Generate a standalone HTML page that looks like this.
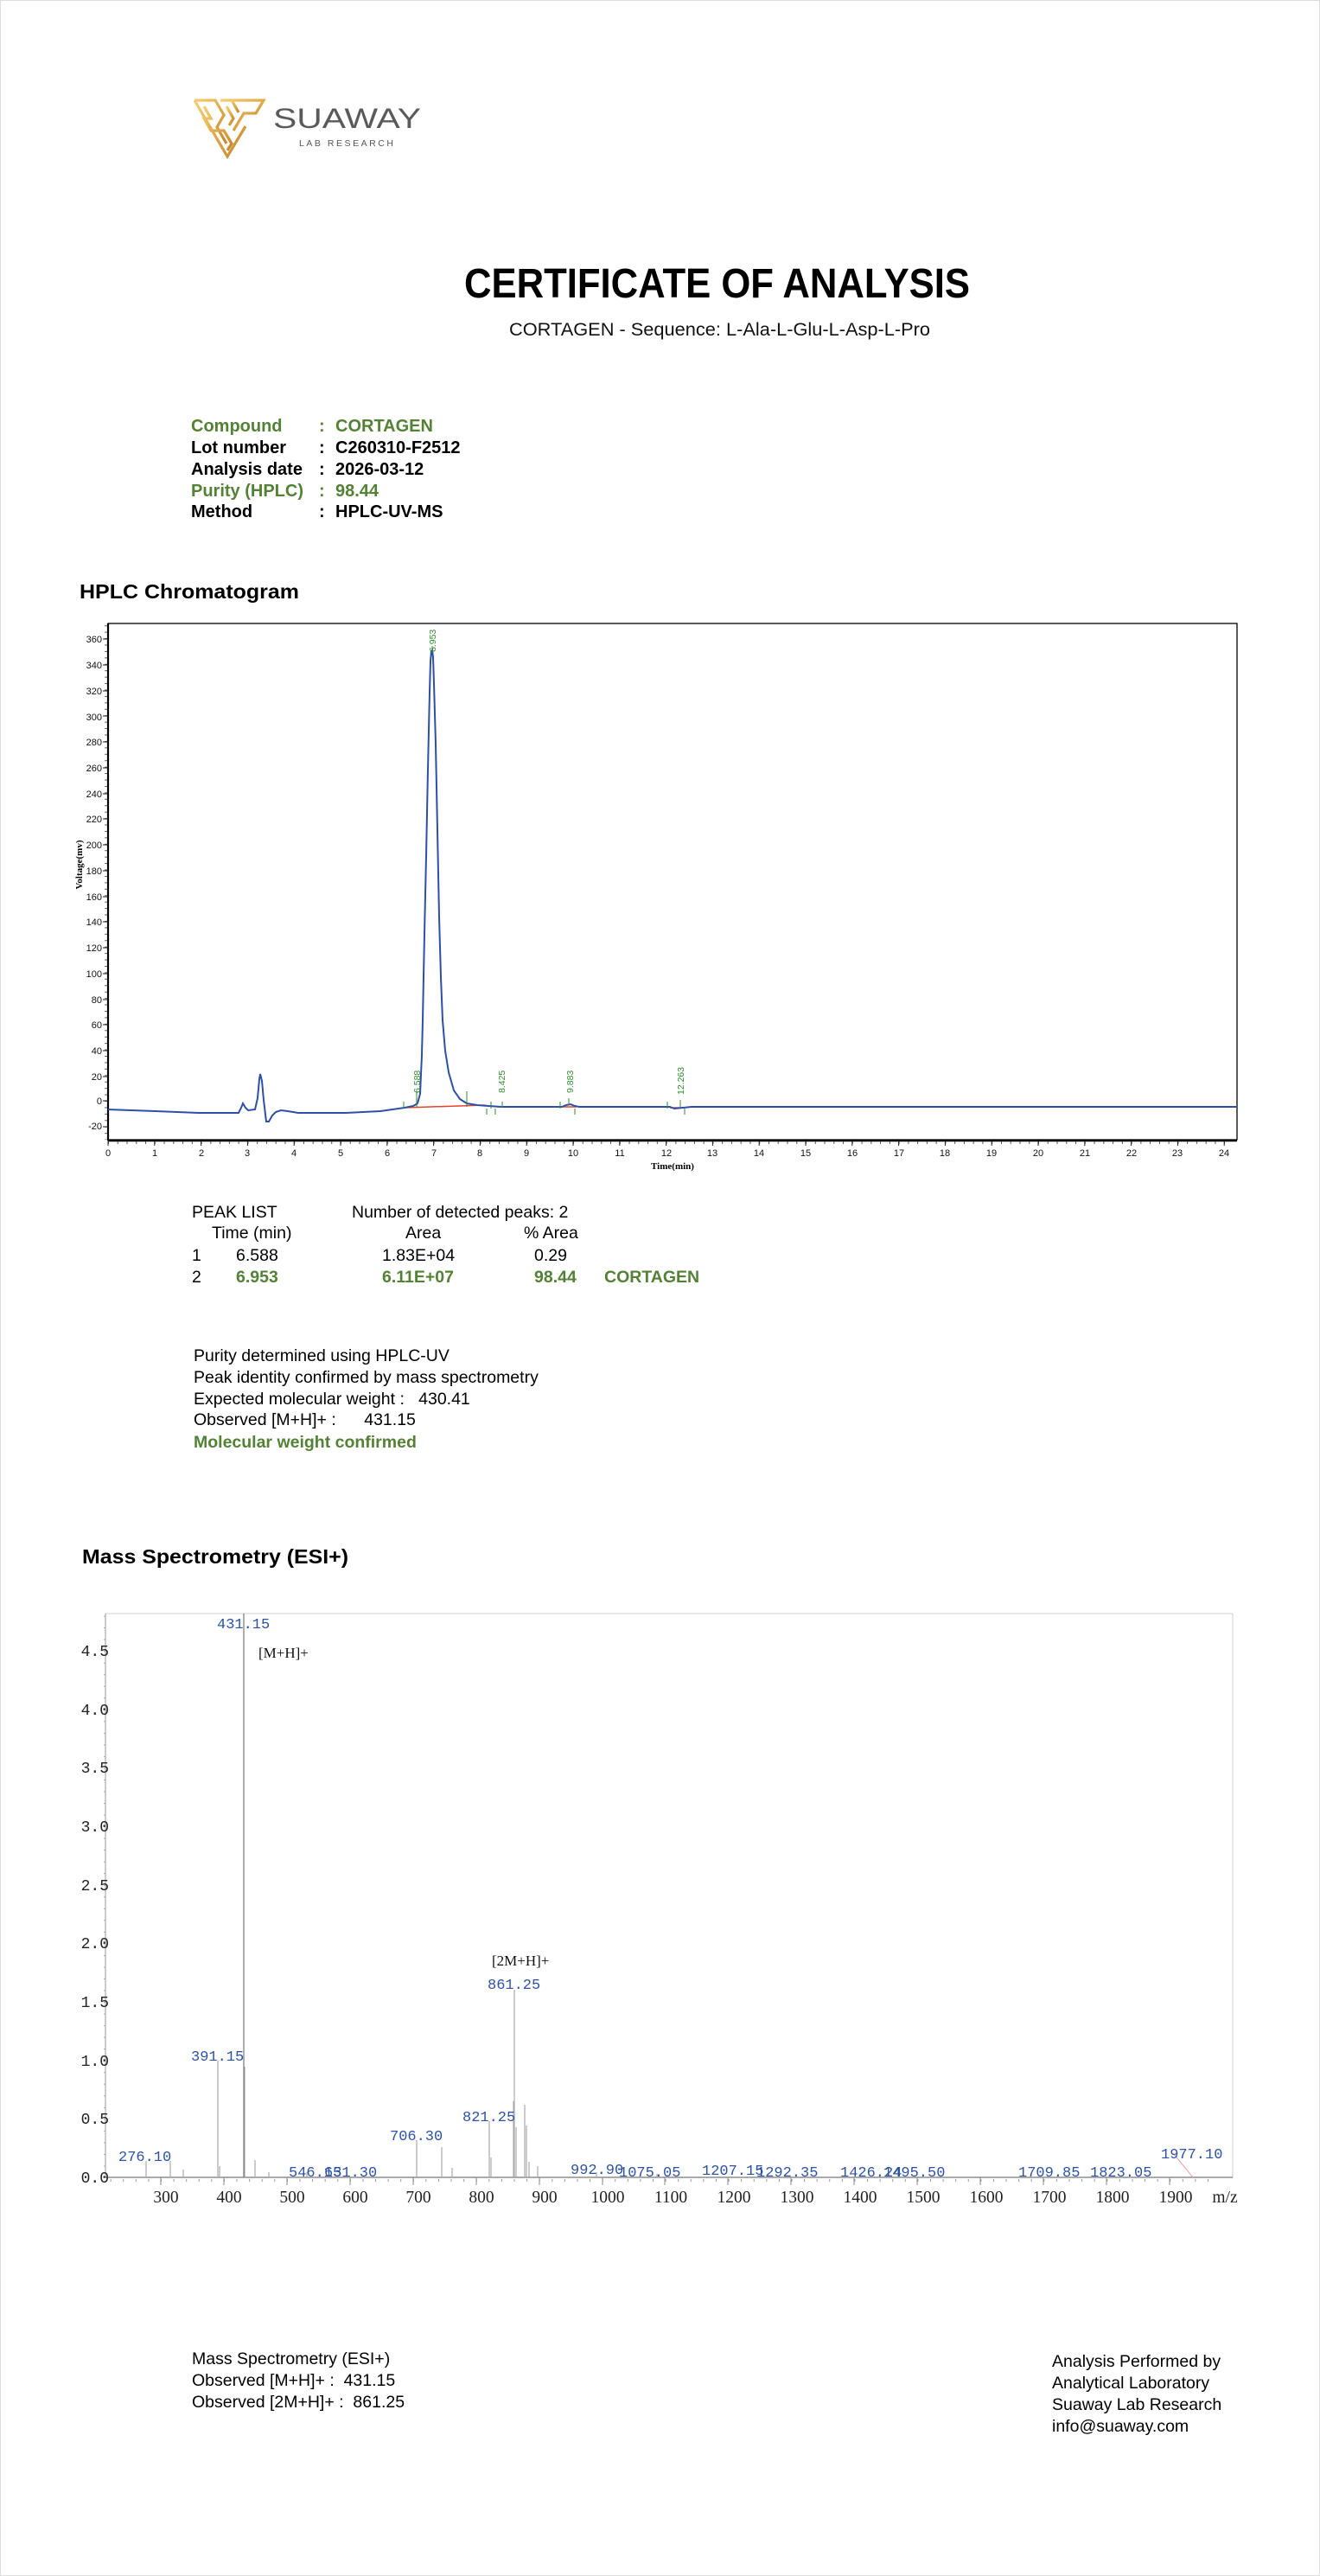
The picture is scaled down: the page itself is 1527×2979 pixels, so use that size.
<!DOCTYPE html>
<html><head><meta charset="utf-8"><style>
html,body{margin:0;padding:0;background:#fff}
svg{display:block}
text{font-family:"Liberation Sans",Arial,sans-serif}
.mono text, text.mono{font-family:"Liberation Mono",monospace}
.serif text, text.serif{font-family:"Liberation Serif",serif}
</style></head><body>
<svg width="1527" height="2979" viewBox="0 0 1527 2979" xmlns="http://www.w3.org/2000/svg">
<defs>
<linearGradient id="gold" x1="0" y1="0" x2="1" y2="1">
<stop offset="0" stop-color="#f2cf72"/><stop offset="0.5" stop-color="#e0a94a"/><stop offset="1" stop-color="#c4862e"/>
</linearGradient>
<pattern id="hx" x="125" y="0" width="10.76" height="10" patternUnits="userSpaceOnUse"><rect x="0" y="0" width="1" height="3" fill="#555"/></pattern>
<pattern id="hy" x="0" y="1273" width="10" height="7.43" patternUnits="userSpaceOnUse"><rect x="0" y="0" width="4" height="1" fill="#666"/></pattern>
<pattern id="mx" x="186" y="0" width="14.59" height="10" patternUnits="userSpaceOnUse"><rect x="0" y="0" width="1" height="4" fill="#999"/></pattern>
<pattern id="my" x="0" y="2518" width="10" height="13.53" patternUnits="userSpaceOnUse"><rect x="0" y="0" width="5" height="1" fill="#aaa"/></pattern>
</defs>
<rect x="0.5" y="0.5" width="1526" height="2978" fill="#fff" stroke="#ddd"/>

<!-- logo -->
<g fill="none" stroke="url(#gold)" stroke-width="3.2" stroke-linejoin="miter">
<path d="M225 116 L263 181 L284 146"/>
<path d="M225 116 L249 116 L259 133 L251 147 L262 166"/>
<path d="M236 123 L244 137 L236 137 L244 151 L259 151 L268 166 L263 174"/>
<path d="M255 116 L305 116 L296 131 L282 131 L276 141 L270 151"/>
<path d="M262 123 L270 137 L265 145"/>
<path d="M268 116 L276 130"/>
</g>
<text x="316" y="148" font-size="32" fill="#5a5a5a" textLength="171" lengthAdjust="spacingAndGlyphs">SUAWAY</text>
<text x="346" y="169" font-size="10.5" fill="#555" letter-spacing="3" textLength="112">LAB RESEARCH</text>

<!-- title -->
<text x="537" y="344" font-size="48" font-weight="bold" fill="#000" textLength="585" lengthAdjust="spacingAndGlyphs">CERTIFICATE OF ANALYSIS</text>
<text x="589" y="388" font-size="21" fill="#111" textLength="487" lengthAdjust="spacingAndGlyphs">CORTAGEN - Sequence: L-Ala-L-Glu-L-Asp-L-Pro</text>

<!-- info -->
<g font-size="20" font-weight="bold">
<text x="221" y="499" fill="#538135">Compound</text><text x="369" y="499" fill="#538135">:</text><text x="388" y="499" fill="#538135">CORTAGEN</text>
<text x="221" y="524">Lot number</text><text x="369" y="524">:</text><text x="388" y="524">C260310-F2512</text>
<text x="221" y="549">Analysis date</text><text x="369" y="549">:</text><text x="388" y="549">2026-03-12</text>
<text x="221" y="574" fill="#538135">Purity (HPLC)</text><text x="369" y="574" fill="#538135">:</text><text x="388" y="574" fill="#538135">98.44</text>
<text x="221" y="598">Method</text><text x="369" y="598">:</text><text x="388" y="598">HPLC-UV-MS</text>
</g>

<text x="92" y="692" font-size="23" font-weight="bold" textLength="254" lengthAdjust="spacingAndGlyphs">HPLC Chromatogram</text>

<!-- HPLC chart -->
<rect x="125" y="721" width="1306" height="597" fill="none" stroke="#000" stroke-width="1.3"/>
<line x1="125" y1="721" x2="125" y2="1319" stroke="#000" stroke-width="2.2"/>
<line x1="125" y1="1319" x2="1431" y2="1319" stroke="#000" stroke-width="2.4"/>
<rect x="125" y="1320" width="1292" height="3" fill="url(#hx)"/>
<rect x="121" y="721" width="4" height="597" fill="url(#hy)"/>
<g font-size="11" fill="#111" text-anchor="end">
<text x="118" y="743">360</text><text x="118" y="773">340</text><text x="118" y="803">320</text><text x="118" y="833">300</text>
<text x="118" y="862">280</text><text x="118" y="892">260</text><text x="118" y="922">240</text><text x="118" y="951">220</text>
<text x="118" y="981">200</text><text x="118" y="1011">180</text><text x="118" y="1041">160</text><text x="118" y="1070">140</text>
<text x="118" y="1100">120</text><text x="118" y="1130">100</text><text x="118" y="1160">80</text><text x="118" y="1189">60</text>
<text x="118" y="1219">40</text><text x="118" y="1249">20</text><text x="118" y="1277">0</text><text x="118" y="1306">-20</text>
</g>
<g stroke="#222" stroke-width="1">
<path d="M119 739H125M119 769H125M119 799H125M119 828H125M119 858H125M119 888H125M119 918H125M119 947H125M119 977H125M119 1007H125M119 1037H125M119 1066H125M119 1096H125M119 1126H125M119 1156H125M119 1185H125M119 1215H125M119 1245H125M119 1273H125M119 1303H125"/>
<path d="M125 1319v6M178.8 1319v6M232.6 1319v6M286.4 1319v6M340.2 1319v6M394 1319v6M447.8 1319v6M501.6 1319v6M555.4 1319v6M609.2 1319v6M663 1319v6M716.8 1319v6M770.6 1319v6M824.4 1319v6M878.2 1319v6M932 1319v6M985.8 1319v6M1039.6 1319v6M1093.4 1319v6M1147.2 1319v6M1201 1319v6M1254.8 1319v6M1308.6 1319v6M1362.4 1319v6M1416.2 1319v6"/>
</g>
<g font-size="11" fill="#111" text-anchor="middle">
<text x="125" y="1337">0</text><text x="179" y="1337">1</text><text x="233" y="1337">2</text><text x="286" y="1337">3</text><text x="340" y="1337">4</text><text x="394" y="1337">5</text><text x="448" y="1337">6</text><text x="502" y="1337">7</text><text x="555" y="1337">8</text><text x="609" y="1337">9</text><text x="663" y="1337">10</text><text x="717" y="1337">11</text><text x="771" y="1337">12</text><text x="824" y="1337">13</text><text x="878" y="1337">14</text><text x="932" y="1337">15</text><text x="986" y="1337">16</text><text x="1040" y="1337">17</text><text x="1093" y="1337">18</text><text x="1147" y="1337">19</text><text x="1201" y="1337">20</text><text x="1255" y="1337">21</text><text x="1309" y="1337">22</text><text x="1362" y="1337">23</text><text x="1416" y="1337">24</text>
</g>
<text x="778" y="1352" font-size="11" class="serif" font-weight="bold" text-anchor="middle">Time(min)</text>
<text transform="translate(95,1000) rotate(-90)" font-size="11" class="serif" font-weight="bold" text-anchor="middle">Voltage(mv)</text>

<!-- red baselines -->
<g stroke="#e8412c" stroke-width="1.5" fill="none">
<path d="M468 1281 L560 1278 L565 1279"/><path d="M575 1280L587 1280"/><path d="M650 1280L667 1280"/><path d="M775 1281L792 1281"/>
</g>
<!-- trace -->
<path fill="none" stroke="#2e4fa8" stroke-width="2" d="M125 1283 L180 1285 L230 1287 L276 1287 L279 1281 L281 1276 L284 1281 L287 1284 L295 1283 L298 1270 L300 1248 L301 1242 L303 1250 L305 1272 L308 1297 L311 1297 L315 1290 L319 1286 L325 1284 L333 1285 L345 1287 L400 1287 L440 1285 L468 1281 L478 1279 L483 1276 L486 1265 L488 1220 L489 1180 L491 1080 L493 990 L495 890 L497 800 L498 765 L499 753 L500 752 L501 760 L502 790 L504 860 L506 960 L508 1060 L510 1130 L512 1180 L515 1215 L519 1240 L525 1261 L532 1271 L540 1276 L552 1278 L565 1279 L580 1280 L650 1280 L655 1278 L660 1277 L665 1279 L670 1280 L775 1280 L780 1282 L800 1280 L1431 1280"/>
<!-- peak markers -->
<g stroke="#2e8b2e" stroke-width="1" fill="none">
<path d="M467 1274v8M482 1262v18M540 1262v18M563 1282v7M568 1274v8M573 1282v7M581 1274v7M648 1274v8M658 1270v8M665 1282v7M772 1274v8M787 1272v8M792 1282v7M500 755v-8"/>
</g>
<g font-size="10.5" fill="#2e8b2e">
<text transform="translate(486,1264) rotate(-90)">6.588</text>
<text transform="translate(584,1264) rotate(-90)">8.425</text>
<text transform="translate(663,1264) rotate(-90)">9.883</text>
<text transform="translate(791,1266) rotate(-90)">12.263</text>
<text transform="translate(504,754) rotate(-90)">6.953</text>
</g>

<!-- peak list -->
<g font-size="19.5" fill="#000">
<text x="222" y="1408">PEAK LIST</text><text x="407" y="1408">Number of detected peaks: 2</text>
<text x="245" y="1432">Time (min)</text><text x="469" y="1432">Area</text><text x="606" y="1432">% Area</text>
<text x="222" y="1458">1</text><text x="273" y="1458">6.588</text><text x="442" y="1458">1.83E+04</text><text x="618" y="1458">0.29</text>
<text x="222" y="1483">2</text>
<g font-weight="bold" fill="#538135"><text x="273" y="1483">6.953</text><text x="442" y="1483">6.11E+07</text><text x="618" y="1483">98.44</text><text x="699" y="1483">CORTAGEN</text></g>
</g>
<g font-size="19.5" fill="#000">
<text x="224" y="1574">Purity determined using HPLC-UV</text>
<text x="224" y="1599">Peak identity confirmed by mass spectrometry</text>
<text x="224" y="1624" xml:space="preserve">Expected molecular weight :   430.41</text>
<text x="224" y="1648" xml:space="preserve">Observed [M+H]+ :      431.15</text>
<text x="224" y="1674" font-weight="bold" fill="#538135">Molecular weight confirmed</text>
</g>

<text x="95" y="1808" font-size="23" font-weight="bold" textLength="308" lengthAdjust="spacingAndGlyphs">Mass Spectrometry (ESI+)</text>

<!-- MS chart -->
<rect x="122" y="1866" width="1304" height="652" fill="none" stroke="#ccc" stroke-width="1"/>
<line x1="122" y1="1866" x2="122" y2="2518" stroke="#999" stroke-width="1"/>
<line x1="122" y1="2518" x2="1426" y2="2518" stroke="#555" stroke-width="1"/>
<rect x="117" y="1866" width="5" height="652" fill="url(#my)"/>
<rect x="122" y="2519" width="1285" height="4" fill="url(#mx)"/>
<g stroke="#888" stroke-width="1"><path d="M186 2518v9M259 2518v9M332 2518v9M405 2518v9M478 2518v9M551 2518v9M624 2518v9M697 2518v9M769 2518v9M842 2518v9M915 2518v9M988 2518v9M1061 2518v9M1134 2518v9M1207 2518v9M1280 2518v9M1353 2518v9"/></g>
<g class="mono" font-size="18" fill="#222" text-anchor="end">
<text x="126" y="1915">4.5</text><text x="126" y="1983">4.0</text><text x="126" y="2050">3.5</text><text x="126" y="2118">3.0</text><text x="126" y="2186">2.5</text><text x="126" y="2253">2.0</text><text x="126" y="2321">1.5</text><text x="126" y="2389">1.0</text><text x="126" y="2456">0.5</text><text x="126" y="2524">0.0</text>
</g>
<g class="serif" font-size="19.5" fill="#222" text-anchor="middle">
<text x="192" y="2547">300</text><text x="265" y="2547">400</text><text x="338" y="2547">500</text><text x="411" y="2547">600</text><text x="484" y="2547">700</text><text x="557" y="2547">800</text><text x="630" y="2547">900</text><text x="703" y="2547">1000</text><text x="776" y="2547">1100</text><text x="849" y="2547">1200</text><text x="922" y="2547">1300</text><text x="995" y="2547">1400</text><text x="1068" y="2547">1500</text><text x="1141" y="2547">1600</text><text x="1214" y="2547">1700</text><text x="1287" y="2547">1800</text><text x="1360" y="2547">1900</text><text x="1417" y="2547">m/z</text>
</g>
<!-- MS peaks -->
<g stroke="#aaa" stroke-width="1.2">
<path d="M169 2518V2499M197 2518V2499M212 2518V2509M252 2518V2383M254 2518V2505M283 2518V2390M295 2518V2498M311 2518V2512M355 2518V2512M482 2518V2475M511 2518V2483M523 2518V2507M566 2518V2453M568 2518V2495M594 2518V2430M597 2518V2460M607 2518V2434M609 2518V2458M612 2518V2500M622 2518V2505M690 2518V2512M760 2518V2514"/>
</g>
<line x1="282" y1="1866" x2="282" y2="2518" stroke="#777" stroke-width="1.2"/>
<line x1="595" y1="2301" x2="595" y2="2518" stroke="#aaa" stroke-width="1.2"/>
<line x1="1357" y1="2490" x2="1380" y2="2518" stroke="#f2a0a0" stroke-width="1"/>
<g class="mono" font-size="17" fill="#2d52a3">
<text x="251" y="1883">431.15</text>
<text x="564" y="2300">861.25</text>
<text x="221" y="2383">391.15</text>
<text x="535" y="2453">821.25</text>
<text x="451" y="2475">706.30</text>
<text x="137" y="2499">276.10</text>
<text x="334" y="2517">546.15</text><text x="375" y="2517">631.30</text>
<text x="660" y="2514">992.90</text><text x="716" y="2517">1075.05</text>
<text x="812" y="2515">1207.15</text><text x="875" y="2517">1292.35</text>
<text x="972" y="2517">1426.24</text><text x="1022" y="2517">1495.50</text>
<text x="1178" y="2517">1709.85</text><text x="1261" y="2517">1823.05</text>
<text x="1343" y="2496">1977.10</text>
</g>
<g class="serif" font-size="17" fill="#111">
<text x="299" y="1917">[M+H]+</text>
<text x="569" y="2273">[2M+H]+</text>
</g>

<!-- footer -->
<g font-size="19.5" fill="#000">
<text x="222" y="2734">Mass Spectrometry (ESI+)</text>
<text x="222" y="2759" xml:space="preserve">Observed [M+H]+ :  431.15</text>
<text x="222" y="2784" xml:space="preserve">Observed [2M+H]+ :  861.25</text>
<text x="1217" y="2737">Analysis Performed by</text>
<text x="1217" y="2762">Analytical Laboratory</text>
<text x="1217" y="2787">Suaway Lab Research</text>
<text x="1217" y="2812">info@suaway.com</text>
</g>
</svg>
</body></html>
